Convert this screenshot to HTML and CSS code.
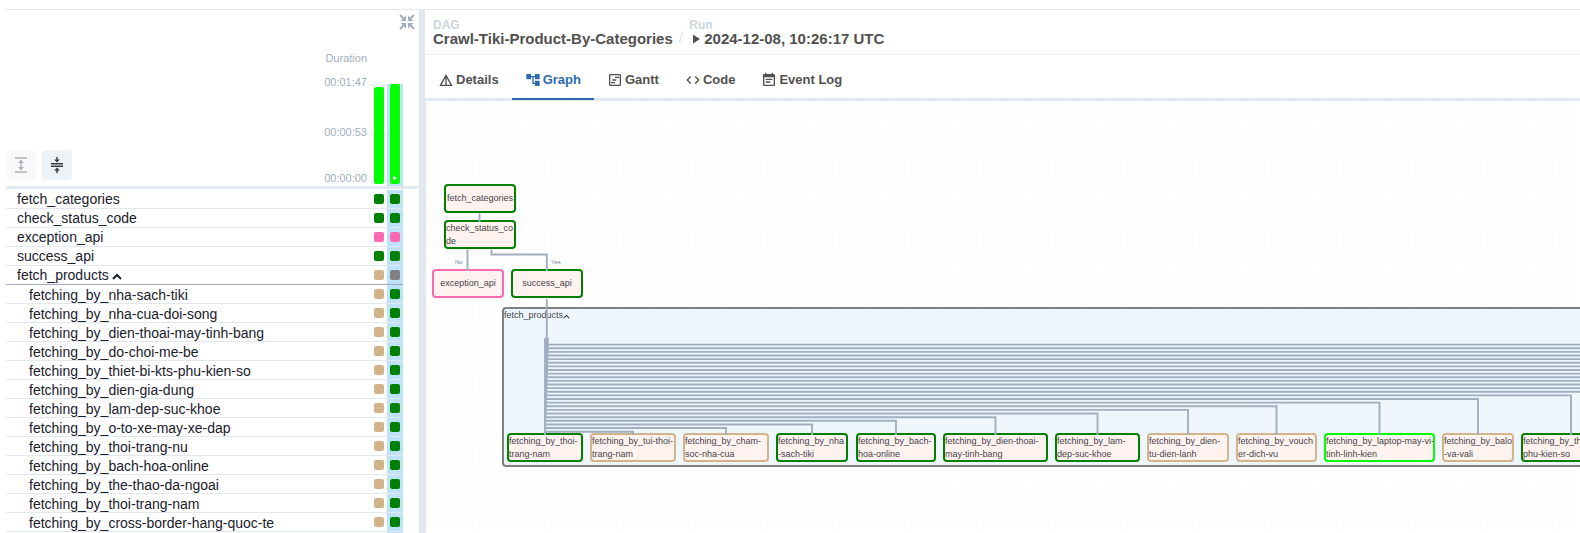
FILE: index.html
```html
<!DOCTYPE html>
<html lang="en">
<head>
<meta charset="utf-8">
<title>Crawl-Tiki-Product-By-Categories</title>
<link rel="stylesheet" href="styles.css">
</head>
<body>
<div class="page">
  <section class="grid-panel">
    <div class="grid-head">
      <button class="hide-details" aria-label="Hide details panel">
        <svg viewBox="0 0 16 16" width="16" height="16"><path d="M7 7H1.500L7 1.500zM9 7h5.500L9 1.500zM7 9H1.500L7 14.500zM9 9h5.500L9 14.500z" fill="currentColor"/><path d="M1 1l4 4M15 1l-4 4M1 15l4-4M15 15l-4-4" fill="none" stroke="currentColor" stroke-width="2"/></svg>
      </button>
      <div class="toggles">
        <button class="toggle" disabled aria-label="Expand all task groups">
          <svg viewBox="0 0 14 16" width="14" height="16"><path d="M1 1h12M1 15h12M7 4v8" fill="none" stroke="currentColor" stroke-width="1.500"/><path d="M7 2.500l3 3.500H4zM7 13.500l3-3.500H4z" fill="currentColor"/></svg>
        </button>
        <button class="toggle" aria-label="Collapse all task groups">
          <svg viewBox="0 0 14 16" width="14" height="16"><path d="M1 6.700h12M1 9.300h12M7 0v3M7 13v3" fill="none" stroke="currentColor" stroke-width="1.500"/><path d="M7 5.500l3-3H4zM7 10.500l3 3H4z" fill="currentColor"/></svg>
        </button>
      </div>
      <div class="axis">
        <span>Duration</span><span>00:01:47</span><span>00:00:53</span><span>00:00:00</span>
      </div>
      <div class="bars">
        <div class="run"><div class="bar first"></div></div>
        <div class="run selected"><div class="bar second"><svg viewBox="0 0 4 4" width="4" height="4"><path d="M0 0l4 2-4 2z" fill="#fff"/></svg></div></div>
      </div>
    </div>
    <table class="tasks"><tbody id="tasks"></tbody></table>
  </section>
  <div class="divider"></div>
  <main class="details">
    <header class="crumbs">
      <div class="crumb"><small>DAG</small><strong>Crawl-Tiki-Product-By-Categories</strong></div>
      <span class="slash">/</span>
      <div class="crumb"><small>Run</small><strong><svg viewBox="0 0 8 10" width="8" height="10"><path d="M1 0.500l7 4.500-7 4.500z" fill="currentColor"/></svg>2024-12-08, 10:26:17 UTC</strong></div>
    </header>
    <nav class="tabs">
      <button class="tab"><svg viewBox="0 0 24 24" width="16" height="16"><path d="M12 3L2 21h20L12 3zm1 5.920L18.600 19H13V8.920zm-2 0V19H5.400L11 8.920z" fill="currentColor"/></svg>Details</button>
      <button class="tab active"><svg viewBox="0 0 24 24" width="16" height="16"><path d="M22 11V3h-7v3H9V3H2v8h7V8h2v10h4v3h7v-8h-7v3h-2V8h2v3z" fill="currentColor"/></svg>Graph</button>
      <button class="tab"><svg viewBox="0 0 24 24" width="16" height="16"><path d="M19 5v14H5V5h14m0-2H5c-1.100 0-2 .9-2 2v14c0 1.100.9 2 2 2h14c1.100 0 2-.9 2-2V5c0-1.100-.9-2-2-2zm-7 6h6V7h-6v2zm-4 4h6v-2H8v2zm-2 4h6v-2H6v2z" fill="currentColor"/></svg>Gantt</button>
      <button class="tab"><svg viewBox="0 0 24 24" width="16" height="16"><path d="M9.400 16.600L4.800 12l4.600-4.600L8 6l-6 6 6 6 1.400-1.400zm5.200 0l4.600-4.600-4.600-4.600L16 6l6 6-6 6-1.400-1.400z" fill="currentColor"/></svg>Code</button>
      <button class="tab"><svg viewBox="0 0 24 24" width="16" height="16"><path d="M17 10H7v2h10v-2zm2-7h-1V1h-2v2H8V1H6v2H5c-1.110 0-2 .9-2 2v14c0 1.100.9 2 2 2h14c1.100 0 2-.9 2-2V5c0-1.100-.9-2-2-2zm0 16H5V8h14v11zm-5-5H7v2h7v-2z" fill="currentColor"/></svg>Event Log</button>
    </nav>
    <div class="canvas" id="canvas"></div>
  </main>
</div>
<script src="app.js"></script>
</body>
</html>
```
FILE: styles.css
```css
* { box-sizing: border-box; }
body {
  margin: 0;
  overflow: hidden;
  background: #fff;
  color: #1a202c;
  font-family: "Liberation Sans", Arial, sans-serif;
  font-size: 14px;
}
button {
  border: 0;
  padding: 0;
  background: none;
  font: inherit;
  color: inherit;
}
svg { display: block; flex: none; }
.page {
  display: flex;
  height: 100vh;
  padding: 9px 0 0 6px;
}

/* Grid panel */
.grid-panel {
  flex: 0 0 413px;
  overflow: hidden;
  border-top: 1px solid #e2e8f0;
}
.grid-head {
  position: relative;
  display: flex;
  align-items: flex-end;
  height: 179px;
  border-bottom: 3px solid #e2e8f0;
}
.hide-details {
  position: absolute;
  top: 4px;
  right: 4px;
  color: #a0aec0;
}
.toggles { display: flex; gap: 6px; margin: 0 auto 6px 0; }
.toggle {
  display: grid;
  place-items: center;
  width: 30px;
  height: 30px;
  border-radius: 4px;
  background: #edf2f7;
  color: #3c3f45;
}
.toggle:disabled { opacity: .4; }
.axis {
  display: grid;
  grid-template-rows: 24px 50px 46px 15px;
  margin-right: 4px;
  color: #a0aec0;
  font-size: 11px;
  line-height: 14px;
  text-align: right;
}
.bars {
  display: flex;
  height: 102px;
  margin-right: 16px;
  background: linear-gradient(#e2e8f0, #e2e8f0) 0 1px / 100% 1px no-repeat,
    linear-gradient(#e2e8f0, #e2e8f0) 0 51px / 100% 1px no-repeat,
    linear-gradient(#e2e8f0, #e2e8f0) 0 97px / 100% 1px no-repeat;
}
.run {
  display: flex;
  align-items: flex-end;
  justify-content: center;
  width: 16px;
  padding-bottom: 2px;
}
.run.selected { background: #bee3f8; }
.bar {
  display: flex;
  align-items: flex-end;
  justify-content: center;
  width: 10px;
  padding-bottom: 4px;
  border-radius: 2px;
  background: #0f0;
}
.first { height: 97px; }
.second { height: 100px; }
.tasks {
  width: 397px;
  margin-top: 1px;
  border-collapse: separate;
  border-spacing: 0;
  table-layout: fixed;
}
.tasks td {
  height: 19px;
  padding: 0;
  border-bottom: 1px solid #e2e8f0;
  line-height: 18px;
}
.tasks .name { padding-left: 11px; white-space: nowrap; }
.tasks .child { padding: 2px 0 0 23px; line-height: 16px; }
.tasks .cell { width: 16px; }
.tasks .selected { background: #bee3f8; }
.tasks .group td { border-bottom-color: #a0aec0; }
.name svg { display: inline-block; margin-left: 3px; vertical-align: 0; }
.state { width: 10px; height: 10px; margin: 0 auto; border-radius: 2px; }
.state.success { background: #008000; }
.state.skipped { background: #ff69b4; }
.state.deferred { background: #d2b48c; }
.state.none { background: #808080; }

/* Details panel */
.divider { flex: 0 0 6px; background: #e2e8f0; }
.details {
  flex: 1;
  min-width: 0;
  display: flex;
  flex-direction: column;
  border-top: 1px solid #e2e8f0;
  color: #51504f;
  font-weight: 700;
}
.crumbs {
  display: flex;
  align-items: flex-end;
  height: 45px;
  padding: 0 8px 7px;
  border-bottom: 1px solid #edf2f7;
}
.crumb { display: flex; flex-direction: column; }
.crumb small { color: #cbd5e0; font-size: 12px; line-height: 12px; }
.crumb strong {
  display: flex;
  align-items: center;
  gap: 4px;
  font-size: 15px;
  line-height: 16px;
}
.crumb svg { margin-left: 3px; }
.slash { margin: 0 6px; color: #e2e8f0; font-size: 16px; font-weight: 400; }
.tabs {
  display: flex;
  height: 46px;
  border-bottom: 3px solid #e2e8f0;
}
.tab {
  display: flex;
  align-items: center;
  gap: 2px;
  height: 45px;
  padding: 6px 13px 0 13px;
  border-bottom: 2px solid transparent;
  font-size: 13px;
}
.tab.active { border-color: #2b6cb0; color: #2b6cb0; }

/* Graph canvas */
.canvas {
  position: relative;
  flex: 1;
  overflow: hidden;
  border-left: 1px solid #e2e8f0;
  font-weight: 400;
}
.canvas > svg { position: absolute; inset: 0; width: 100%; height: 100%; }
.node {
  position: absolute;
  display: flex;
  flex-direction: column;
  justify-content: center;
  height: 29px;
  border: 2px solid #008000;
  border-radius: 4px;
  background: #fff2ef;
  color: #45444a;
  font-size: 9px;
  line-height: 13px;
  white-space: nowrap;
}
.node.center { align-items: center; }
.node.skipped { border-color: #ff69b4; }
.node.deferred { border-color: #d2b48c; }
.node.running { border-color: #0f0; }
.group-box {
  position: absolute;
  display: flex;
  align-items: flex-start;
  padding: 1px 0;
  border: 2px solid #808080;
  border-radius: 4px;
  background: #ebf4fcd9;
  color: #45444a;
  font-size: 9px;
  line-height: 11px;
}
.group-box svg { margin-top: 4px; color: #1a202c; }
.edge-label { position: absolute; color: #718096; font-size: 6px; line-height: 8px; }
```
FILE: app.js
```js
const chevron = (w, h, stroke) => `<svg viewBox="0 0 10 7" width="${w}" height="${h}"><path d="M1 6l4-4 4 4" fill="none" stroke="currentColor" stroke-width="${stroke}"/></svg>`;

const tasks = [
  ["fetch_categories", "success", "success"],
  ["check_status_code", "success", "success"],
  ["exception_api", "skipped", "skipped"],
  ["success_api", "success", "success"],
  ["fetch_products", "deferred", "none", "group"],
  ...["nha-sach-tiki", "nha-cua-doi-song", "dien-thoai-may-tinh-bang", "do-choi-me-be",
    "thiet-bi-kts-phu-kien-so", "dien-gia-dung", "lam-dep-suc-khoe", "o-to-xe-may-xe-dap",
    "thoi-trang-nu", "bach-hoa-online", "the-thao-da-ngoai", "thoi-trang-nam",
    "cross-border-hang-quoc-te"].map(n => ["fetching_by_" + n, "deferred", "success", "child"]),
  ["", "", "", "child"],
];
document.getElementById("tasks").innerHTML = tasks.map(([name, a, b, kind = ""]) =>
  `<tr class="${kind === "group" ? "group" : ""}"><td class="name ${kind}">${name}${kind === "group" ? chevron(10, 7, 2) : ""}</td>` +
  `<td class="cell"><div class="state ${a}"></div></td><td class="cell selected"><div class="state ${b}"></div></td></tr>`).join("");

// Canvas coordinates: origin is the top left corner of the graph area.
const nodes = [
  [18, 83, 72, ["fetch_categories"], "center"],
  [18, 119, 72, ["check_status_co", "de"], ""],
  [6, 168, 72, ["exception_api"], "center skipped"],
  [85, 168, 72, ["success_api"], "center"],
  [81, 332, 76, ["fetching_by_thoi-", "trang-nam"], ""],
  [164, 332, 86, ["fetching_by_tui-thoi-", "trang-nam"], "deferred"],
  [257, 332, 86, ["fetching_by_cham-", "soc-nha-cua"], "deferred"],
  [350, 332, 72, ["fetching_by_nha", "-sach-tiki"], ""],
  [430, 332, 80, ["fetching_by_bach-", "hoa-online"], ""],
  [517, 332, 105, ["fetching_by_dien-thoai-", "may-tinh-bang"], ""],
  [629, 332, 85, ["fetching_by_lam-", "dep-suc-khoe"], ""],
  [721, 332, 82, ["fetching_by_dien-", "tu-dien-lanh"], "deferred"],
  [810, 332, 81, ["fetching_by_vouch", "er-dich-vu"], "deferred"],
  [898, 332, 111, ["fetching_by_laptop-may-vi-", "tinh-linh-kien"], "running"],
  [1016, 332, 72, ["fetching_by_balo", "-va-vali"], "deferred"],
  [1095, 332, 100, ["fetching_by_thiet-bi-kts-", "phu-kien-so"], ""],
];
const children = nodes.slice(5);
let d = "M53.500 112.500V121M41.500 148.500V170M65.500 148.500V153.500H120.800V170M120.800 198V240";
for (let i = 0; i < 25; i++) {
  const y = 330.700 - i * 3.630;
  const x = 119 + i * 0.120;
  const child = children[i];
  d += `M${x} 237V${y}H${child ? child[0] + child[2] / 2 : 1400}`;
  if (child) d += "V334";
}
d += "M119 237V334";
document.getElementById("canvas").innerHTML =
  `<svg><defs><pattern id="dots" x="2" y="1" width="7.200" height="7.200" patternUnits="userSpaceOnUse"><circle cx="1" cy="1" r=".4" fill="#bcbcc4"/></pattern></defs><rect width="100%" height="100%" fill="url(#dots)"/></svg>` +
  `<div class="group-box" style="left:76px;top:206px;width:1900px;height:160px">fetch_products${chevron(7, 5, 1.5)}</div>` +
  nodes.map(([x, y, w, lines, kind]) => `<div class="node ${kind}" style="left:${x}px;top:${y}px;width:${w}px">${lines.map(l => `<span>${l}</span>`).join("")}</div>`).join("") +
  `<svg><path d="${d}" fill="none" stroke="#a0aec0" stroke-width="1.900"/></svg>` +
  `<span class="edge-label" style="left:29px;top:157px">No</span><span class="edge-label" style="left:125px;top:157px">Yes</span>`;
```
